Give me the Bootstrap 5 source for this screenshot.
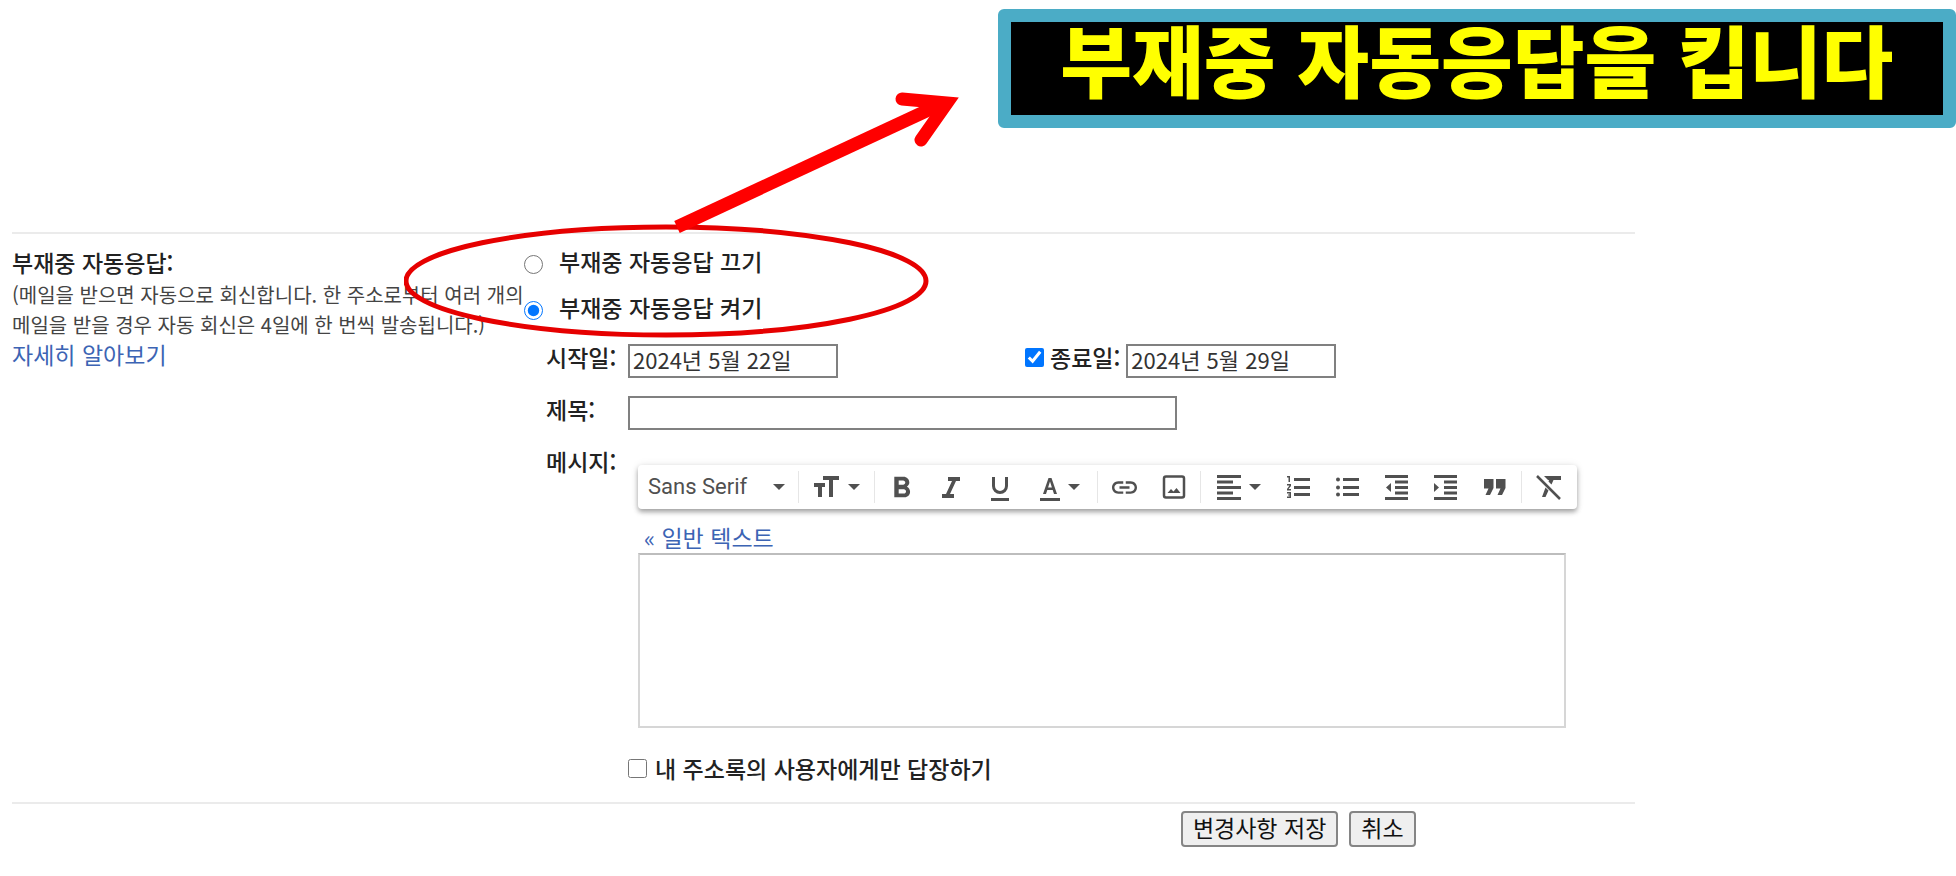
<!DOCTYPE html>
<html lang="ko">
<head>
<meta charset="utf-8">
<meta name="viewport" content="width=device-width, initial-scale=1">
<title>부재중 자동응답</title>
<link rel="stylesheet" href="https://cdn.jsdelivr.net/npm/bootstrap@5.3.0/dist/css/bootstrap.min.css">
<style>
  body { font-family: "Noto Sans CJK KR", sans-serif; font-size: 23px; line-height: 30px; color: #222; background: #fff; }
  a { color: #3c64b4; text-decoration: none; }
  .banner { width: 49%; border: 13px solid #4bacc6; border-radius: 6px; background: #000; color: #ff0; font-size: 78px; font-weight: 900; line-height: 72px; padding-bottom: 21px; margin-top: 9px; }
  .settings { width: 83%; margin: 104px 0 0 12px; }
  .rule { border-top: 2px solid #ebebeb; }
  .about { flex: 0 0 512px; padding-top: 13px; }
  .about-note { font-size: 20px; color: #444; margin-top: 3px; }
  .about a { display: block; line-height: 28px; }
  .fw-label { font-weight: 500; }
  .choices { padding-top: 7px; }
  .choice { height: 46px; gap: 16px; }
  .choice label { padding-bottom: 6px; }
  input[type=radio], input[type=checkbox] { width: 19px; height: 19px; margin: 0; flex: none; }
  .fields { padding-left: 22px; display: grid; grid-template-columns: 82px 1fr; row-gap: 18px; margin-top: 11px; }
  .field-name { line-height: 26px; }
  .box { border: 2px solid #808080; height: 34px; padding: 0 3px 4px; font-size: 22px; color: #333; border-radius: 0; }
  .date { width: 210px; }
  .subject { width: 549px; }
  .start-cell { width: 397px; }
  .end-name { padding: 0 6px; }
  .editor { padding: 17px 0 0 10px; }
  .toolbar { width: max-content; height: 44px; padding-right: 4px; border-radius: 4px; box-shadow: 0 3px 5px rgba(0,0,0,.34), 0 0 8px rgba(0,0,0,.08); color: #505050; }
  .toolbar button { border: 0; background: none; color: inherit; height: 44px; width: 49px; padding: 0; display: flex; align-items: center; justify-content: center; gap: 8px; }
  .toolbar button.font-pick { width: 158px; padding: 0 11px 0 10px; justify-content: space-between; font: 22px/44px Roboto, sans-serif; }
  .toolbar button.with-caret { width: 71px; }
  .toolbar svg { fill: currentColor; flex: none; }
  .caret { width: 0; border: 6px solid transparent; border-top-color: #505050; border-bottom: 0; }
  .divider { width: 1px; height: 32px; background: #e6e6e6; margin: 0 2px; }
  .plain { margin: 13px 0 1px 6px; }
  .message { display: block; width: 928px; height: 175px; border: 2px solid #d6d6d6; border-top-color: #bdbdbd; resize: none; padding: 8px; }
  .contacts { padding: 8px 0 20px; line-height: 28px; }
  .actions { margin: 7px 0 0 72%; gap: 11px; }
  .actions button { border: 2px solid #858585; border-radius: 4px; background: #efefef; color: #111; height: 36px; padding: 0 10px 3px; line-height: 29px; }
  .callout { position: absolute; left: 392px; top: -145px; pointer-events: none; }
</style>
</head>
<body>
<header class="banner ms-auto text-center text-nowrap">부재중 자동응답을 킵니다</header>

<form class="settings position-relative">
  <div class="rule d-flex">
    <div class="about text-nowrap">
      <div class="fw-label">부재중 자동응답:</div>
      <div class="about-note">(메일을 받으면 자동으로 회신합니다. 한 주소로부터 여러 개의<br>메일을 받을 경우 자동 회신은 4일에 한 번씩 발송됩니다.)</div>
      <a href="#">자세히 알아보기</a>
    </div>
    <div class="flex-grow-1">
      <div class="choices fw-label">
        <div class="choice d-flex align-items-center"><input type="radio" name="vacation" id="off"><label for="off">부재중 자동응답 끄기</label></div>
        <div class="choice d-flex align-items-center"><input type="radio" name="vacation" id="on" checked><label for="on">부재중 자동응답 켜기</label></div>
      </div>
      <div class="fields">
        <label class="field-name fw-label" for="start">시작일:</label>
        <div class="d-flex">
          <div class="start-cell"><input class="box date d-block" id="start" type="text" value="2024년 5월 22일"></div>
          <div class="d-flex">
            <input class="mt-1" type="checkbox" id="hasEnd" checked aria-label="종료일 사용">
            <label class="field-name fw-label end-name" for="end">종료일:</label>
            <input class="box date" id="end" type="text" value="2024년 5월 29일">
          </div>
        </div>
        <label class="field-name fw-label" for="subject">제목:</label>
        <div><input class="box subject d-block" id="subject" type="text"></div>
        <label class="field-name fw-label" for="message">메시지:</label>
        <div class="editor">
          <div class="toolbar d-flex align-items-center" role="toolbar" aria-label="서식">
            <button type="button" class="font-pick">Sans Serif<span class="caret"></span></button>
            <span class="divider"></span>
            <button type="button" class="with-caret" aria-label="크기"><svg width="26" height="22" viewBox="0 0 26 22"><path d="M9 0h16v4h-6v17h-4V4H9zM0 7h11v4H8v10H4V11H0z"/></svg><span class="caret"></span></button>
            <span class="divider"></span>
            <button type="button" aria-label="굵게"><svg width="18" height="22" viewBox="6.5 3.5 11.5 15"><path d="M15.6 10.79c.97-.67 1.65-1.77 1.65-2.79 0-2.26-1.75-4-4-4H7v14h7.04c2.09 0 3.71-1.7 3.71-3.79 0-1.52-.86-2.82-2.15-3.42zM10 6.5h3c.83 0 1.5.67 1.5 1.5s-.67 1.5-1.5 1.5h-3v-3zm3.5 9H10v-3h3.5c.83 0 1.5.67 1.5 1.5s-.67 1.5-1.5 1.5z"/></svg></button>
            <button type="button" aria-label="기울임"><svg width="18" height="21" viewBox="0 0 18 21"><path d="M6 0h12v4h-4L8 17h4v4H0v-4h4L10 4H6z"/></svg></button>
            <button type="button" aria-label="밑줄"><svg class="mt-1" width="18" height="25" viewBox="0 0 18 25"><path d="M2.500 0v9a6.500 6.500 0 0 0 13 0V0" fill="none" stroke="currentColor" stroke-width="3"/><path d="M0 21h18v3H0z"/></svg></button>
            <button type="button" class="with-caret" aria-label="글자색"><svg class="mt-1" width="20" height="23" viewBox="0 0 20 23"><path fill-rule="evenodd" d="M8.500 0h3L17 16h-3l-1.300-4H7.300L6 16H3zM10 3.500 8.100 9.500h3.800zM0 20h20v3H0z"/></svg><span class="caret"></span></button>
            <span class="divider"></span>
            <button type="button" aria-label="링크"><svg width="25" height="15" viewBox="2 6.500 20 11"><path d="M3.900 12c0-1.710 1.390-3.100 3.100-3.100h4V7H7c-2.760 0-5 2.240-5 5s2.240 5 5 5h4v-1.900H7c-1.710 0-3.100-1.390-3.100-3.100zM8 13h8v-2H8v2zm9-6h-4v1.900h4c1.710 0 3.100 1.390 3.100 3.100s-1.390 3.100-3.100 3.100h-4V17h4c2.760 0 5-2.240 5-5s-2.240-5-5-5z"/></svg></button>
            <button type="button" aria-label="사진"><svg width="24" height="24" viewBox="0 0 24 24"><rect x="2" y="1.500" width="20" height="21" rx="2" fill="none" stroke="currentColor" stroke-width="2.500"/><path d="m5.500 18 3.500-4 2.500 2.500L14.500 13l4 5z"/></svg></button>
            <span class="divider"></span>
            <button type="button" class="with-caret" aria-label="정렬"><svg width="24" height="25" viewBox="0 0 24 25"><path d="M0 0h24v3H0zM0 5.500h16v3H0zM0 11h24v3H0zM0 16.500h16v3H0zM0 22h24v3H0z"/></svg><span class="caret"></span></button>
            <button type="button" aria-label="번호 목록"><svg width="23" height="22" viewBox="0 0 23 22"><path d="M7 2h16v3H7zM7 10h16v3H7zM7 17h16v3H7zM0 0h3v6H1.500V1.500H0zM0 8h4v2l-2.500 3H4v1.500H0V13l2.500-3.500H0zM0 16h4v6H0v-1.500h2.500v-1H1v-1h1.500v-1H0z"/></svg></button>
            <button type="button" aria-label="글머리 목록"><svg width="23" height="22" viewBox="0 0 23 22"><path d="M7 2h16v3H7zM7 10h16v3H7zM7 17h16v3H7z"/><circle cx="2" cy="3.500" r="2"/><circle cx="2" cy="11.500" r="2"/><circle cx="2" cy="18.500" r="2"/></svg></button>
            <button type="button" aria-label="내어쓰기"><svg width="23" height="25" viewBox="0 0 23 25"><path d="M0 0h23v3H0zM10 5.500h13v3H10zM10 11h13v3H10zM10 16.500h13v3H10zM0 22h23v3H0zM6 8v9l-5-4.500z"/></svg></button>
            <button type="button" aria-label="들여쓰기"><svg width="23" height="25" viewBox="0 0 23 25"><path d="M0 0h23v3H0zM10 5.500h13v3H10zM10 11h13v3H10zM10 16.500h13v3H10zM0 22h23v3H0zM0 8v9l5-4.500z"/></svg></button>
            <button type="button" aria-label="인용"><svg width="22" height="16" viewBox="0 0 22 16"><path d="M0 0h9.500v9L6 16H1.500l3-6.500H0zM12 0h9.500v9L18 16h-4.500l3-6.500H12z"/></svg></button>
            <span class="divider"></span>
            <button type="button" aria-label="서식 지우기"><svg width="25" height="25" viewBox="0 0 25 25"><path d="M8 1h17v4h-7.500l-2 4.500-3-3L13 5h-1zM9.500 12.500l3 3L9.500 22H6z"/><path d="m1 1 23 23" stroke="currentColor" stroke-width="2.500"/></svg></button>
          </div>
          <div class="plain"><a href="#">« 일반 텍스트</a></div>
          <textarea class="message" id="message"></textarea>
        </div>
        <div></div>
        <div class="contacts d-flex align-items-center gap-2"><input type="checkbox" id="contacts"><label class="fw-label" for="contacts">내 주소록의 사용자에게만 답장하기</label></div>
      </div>
    </div>
  </div>
  <div class="rule"></div>
  <div class="actions d-flex"><button type="submit">변경사항 저장</button><button type="button">취소</button></div>

  <svg class="callout" width="570" height="254" viewBox="0 0 570 254" fill="none" aria-hidden="true">
    <ellipse cx="262" cy="194" rx="260" ry="54" stroke="#e60000" stroke-width="5"/>
    <path d="M273 140 533 19" stroke="#f00" stroke-width="13"/>
    <path d="M498 12 543 16 517 53" stroke="#f00" stroke-width="13" stroke-linecap="round"/>
  </svg>
</form>
<script src="https://cdn.jsdelivr.net/npm/bootstrap@5.3.0/dist/js/bootstrap.bundle.min.js"></script>
</body>
</html>
